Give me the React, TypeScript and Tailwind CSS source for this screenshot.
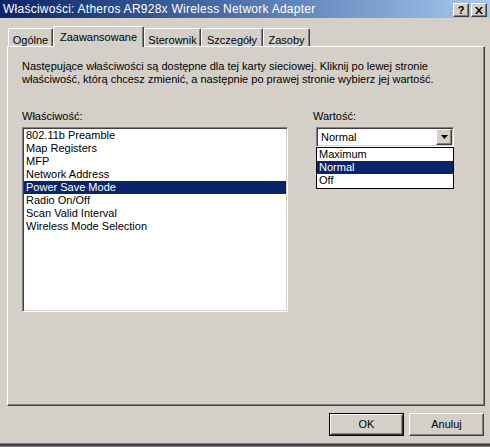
import React from "react";

const properties = [
  "802.11b Preamble",
  "Map Registers",
  "MFP",
  "Network Address",
  "Power Save Mode",
  "Radio On/Off",
  "Scan Valid Interval",
  "Wireless Mode Selection",
];

const values = ["Maximum", "Normal", "Off"];

const tabs = [
  { label: "Ogólne", w: "w-[45px]" },
  { label: "Zaawansowane", w: "w-[91px]", active: true },
  { label: "Sterownik", w: "w-[57px]" },
  { label: "Szczegóły", w: "w-[62px]" },
  { label: "Zasoby", w: "w-[47px]" },
];

// classic 3d borders
const raised =
  "border border-t-white border-l-white border-r-[#404040] border-b-[#404040] shadow-[inset_-1px_-1px_0_#808080]";
const sunken =
  "border border-t-[#808080] border-l-[#808080] border-r-white border-b-white shadow-[inset_1px_1px_0_#404040,inset_-1px_-1px_0_#d4d0c8]";

const CaptionButton: React.FC<{ children: React.ReactNode }> = ({ children }) => (
  <div
    className={`w-[16px] h-[14px] bg-[#d4d0c8] flex items-center justify-center text-black font-bold text-[11px] leading-none ${raised}`}
  >
    {children}
  </div>
);

const App: React.FC = () => {
  return (
    <div className="w-[490px] h-[447px] bg-[#d4d0c8] font-['Liberation_Sans',Arial,sans-serif] text-[11px] text-black flex flex-col overflow-hidden select-none">
      {/* title bar */}
      <div className="h-[18px] shrink-0 bg-gradient-to-r from-[#0a246a] to-[#a6caf0] flex items-center pl-[3px] pr-[3px]">
        <span className="text-white text-[12px] tracking-[0.25px] leading-none flex-1 whitespace-nowrap">
          Właściwości: Atheros AR928x Wireless Network Adapter
        </span>
        <div className="flex gap-[2px] mt-[2px]">
          <CaptionButton>?</CaptionButton>
          <CaptionButton>
            <svg width="8" height="7" viewBox="0 0 8 7">
              <path d="M0 0h2l2 2.2L6 0h2L5 3.5 8 7H6L4 4.8 2 7H0l3-3.5z" fill="#000" />
            </svg>
          </CaptionButton>
        </div>
      </div>

      {/* tab strip */}
      <div className="h-[28px] shrink-0 flex items-end pl-[8px]">
        {tabs.map((t) =>
          t.active ? (
            <div
              key={t.label}
              className={`${t.w} h-[21px] relative z-10 mb-[-1px] bg-[#d4d0c8] border-t border-l border-r border-t-white border-l-white border-r-[#404040] rounded-t-[2px] shadow-[inset_-1px_0_0_#808080] flex justify-center pt-[2px]`}
            >
              {t.label}
            </div>
          ) : (
            <div
              key={t.label}
              className={`${t.w} h-[18px] border-t border-l border-r border-t-white border-l-white border-r-[#404040] rounded-t-[2px] shadow-[inset_-1px_0_0_#808080] flex justify-center pt-[3px]`}
            >
              {t.label}
            </div>
          )
        )}
      </div>

      {/* tab page */}
      <div className={`ml-[7px] w-[478px] h-[360px] shrink-0 ${raised} pl-[14px] pt-[13px]`}>
        <p className="leading-[13px] whitespace-nowrap">
          Następujące właściwości są dostępne dla tej karty sieciowej. Kliknij po lewej stronie
          <br />
          właściwość, którą chcesz zmienić, a następnie po prawej stronie wybierz jej wartość.
        </p>

        <div className="flex mt-[24px]">
          <div className="w-[266px] flex flex-col">
            <span className="leading-[13px] mb-[4px]">Właściwość:</span>
            <div className={`h-[185px] bg-white p-[1px] ${sunken}`}>
              {properties.map((p) => (
                <div
                  key={p}
                  className={`h-[13px] leading-[13px] pl-[2px] whitespace-nowrap ${
                    p === "Power Save Mode" ? "bg-[#0a246a] text-white" : ""
                  }`}
                >
                  {p}
                </div>
              ))}
            </div>
          </div>

          <div className="ml-[25px] flex flex-col">
            <span className="leading-[13px] mb-[4px]">Wartość:</span>
            <div className="relative ml-[3px]">
              <div className={`w-[138px] h-[20px] bg-white p-[1px] flex items-center ${sunken}`}>
                <span className="flex-1 pl-[3px]">Normal</span>
                <div className={`w-[16px] h-[16px] bg-[#d4d0c8] flex items-center justify-center ${raised}`}>
                  <svg width="7" height="4" viewBox="0 0 7 4">
                    <path d="M0 0h7L3.5 4z" fill="#000" />
                  </svg>
                </div>
              </div>
              {/* open dropdown */}
              <div className="absolute left-0 top-[20px] w-[138px] h-[42px] bg-white border border-black z-20">
                {values.map((v) => (
                  <div
                    key={v}
                    className={`h-[13px] leading-[13px] pl-[2px] ${
                      v === "Normal" ? "bg-[#0a246a] text-white" : ""
                    }`}
                  >
                    {v}
                  </div>
                ))}
              </div>
            </div>
          </div>
        </div>
      </div>

      {/* dialog buttons */}
      <div className="flex justify-end gap-[5px] pr-[6px] mt-[7px]">
        <div className="w-[75px] h-[23px] border border-black">
          <div className={`w-full h-full flex items-center justify-center ${raised}`}>OK</div>
        </div>
        <div className={`w-[75px] h-[23px] flex items-center justify-center ${raised}`}>Anuluj</div>
      </div>

      <div className="mt-auto h-[4px] border-t border-b border-t-[#808080] border-b-[#808080] bg-[#404040] shrink-0" />
    </div>
  );
};

export default App;
